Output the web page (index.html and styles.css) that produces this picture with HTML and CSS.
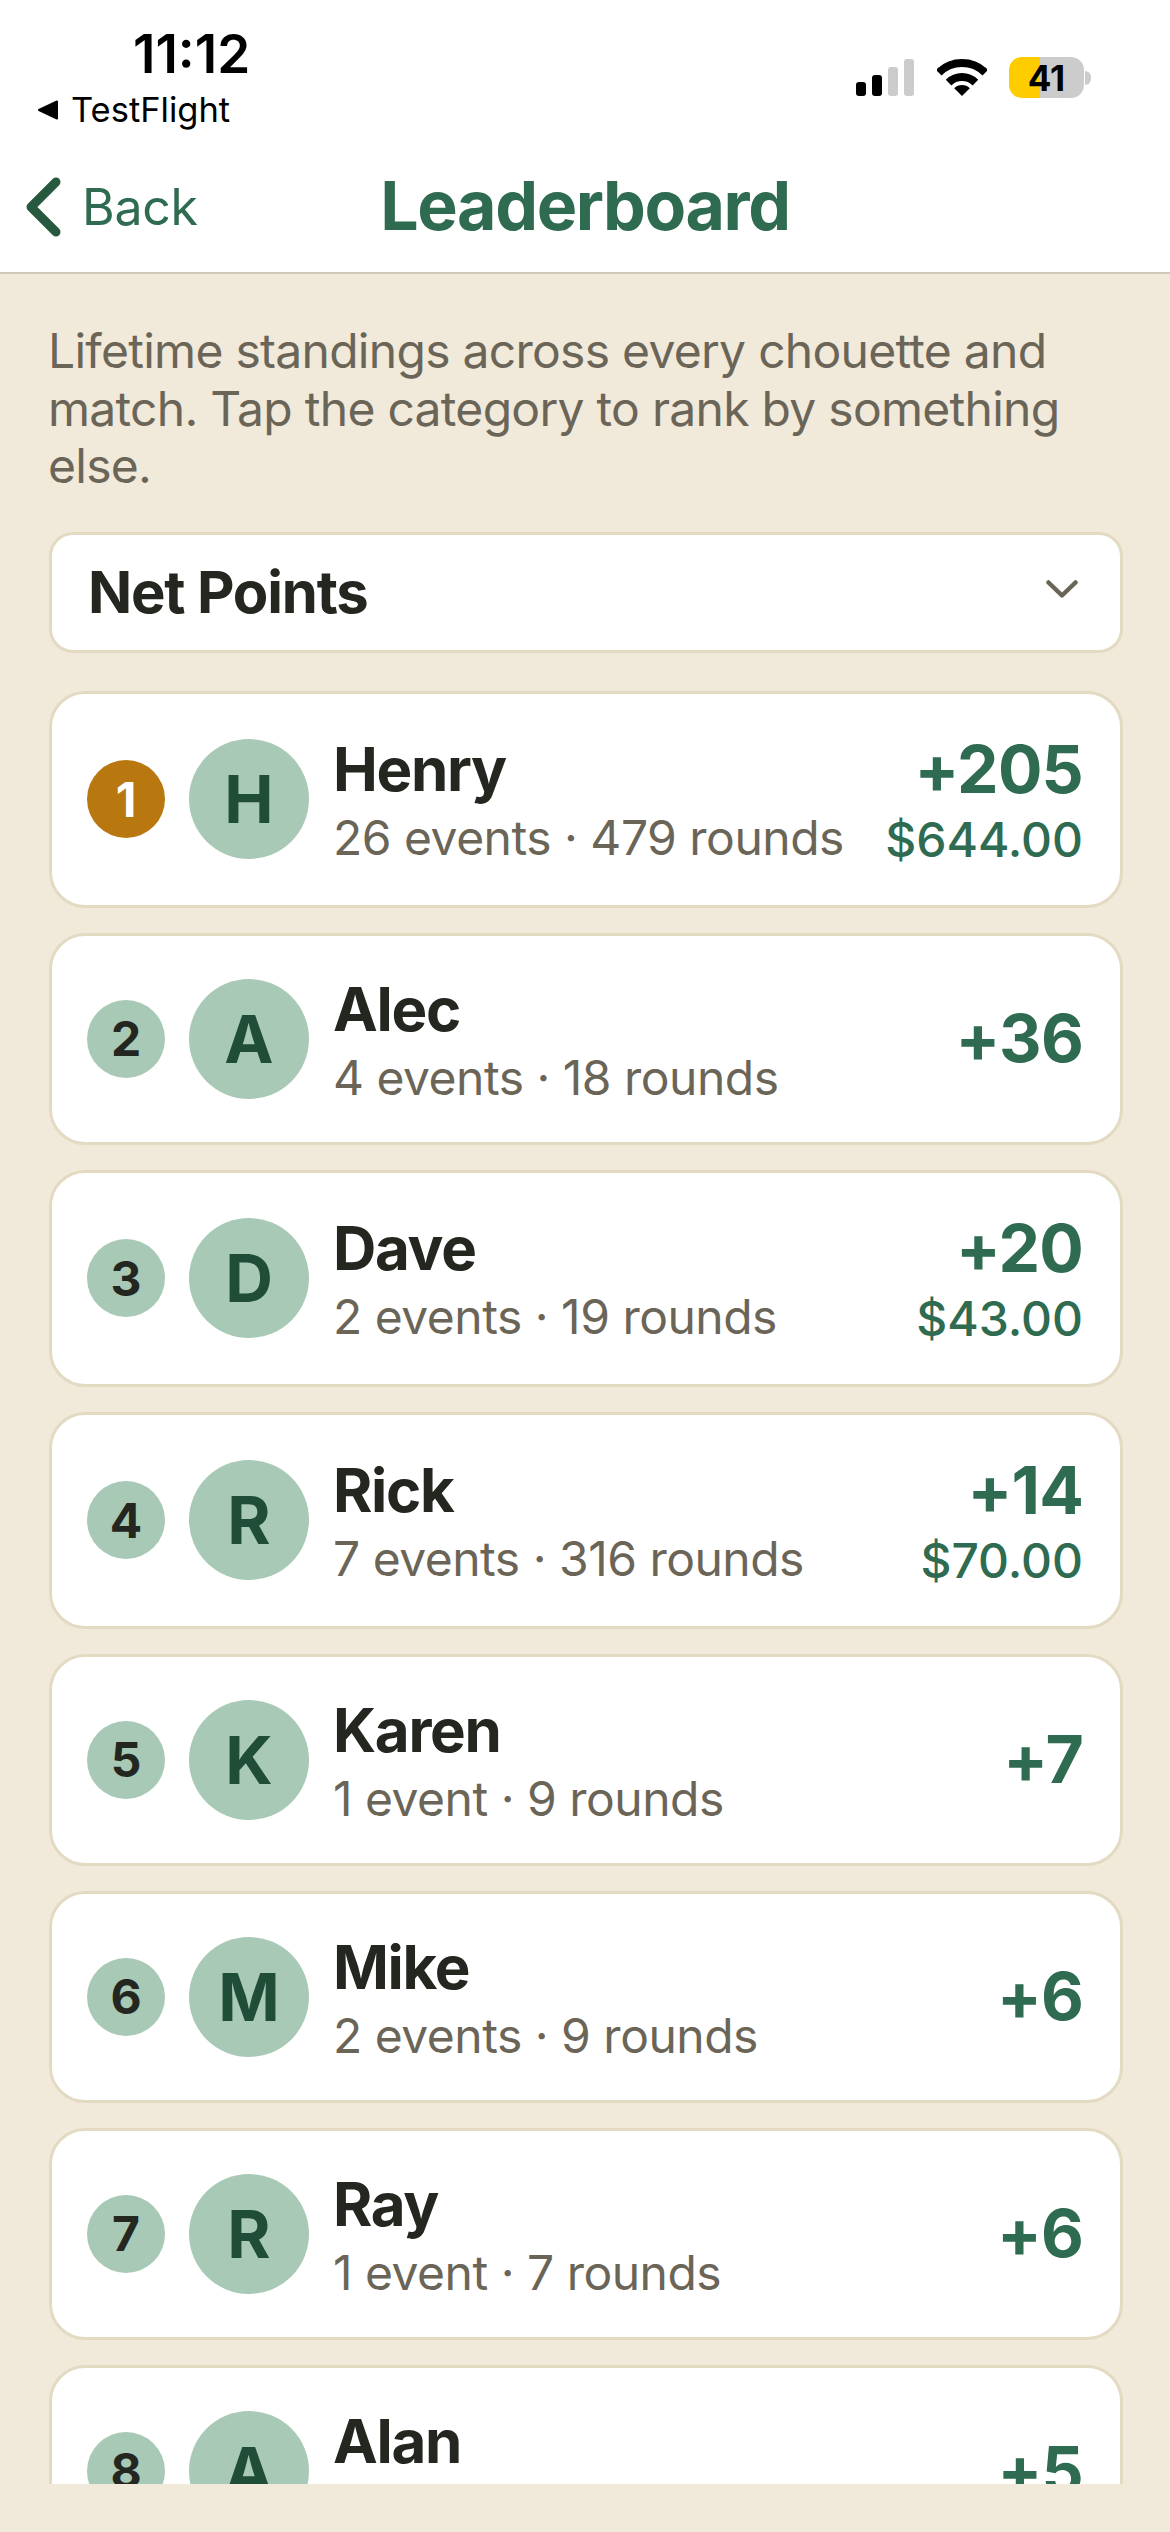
FILE: index.html
```html
<!DOCTYPE html>
<html lang="en">
<head>
    <meta charset="UTF-8">
    <meta name="viewport" content="width=device-width, initial-scale=1.0">
    <title>Leaderboard</title>
    <link rel="stylesheet" href="styles.css">
</head>
<body>
    <header>
        <div class="status-bar">
            <div class="status-left">
                <div class="time">11:12</div>
                <div class="return-app">
                    <svg class="return-arrow" viewBox="0 0 21 20"><path d="M20 1.5V18.5L2 10Z" fill="#000" stroke="#000" stroke-width="2" stroke-linejoin="round"/></svg>
                    <span>TestFlight</span>
                </div>
            </div>
            <div class="status-right">
                <div class="signal">
                    <span class="bar bar-1"></span>
                    <span class="bar bar-2"></span>
                    <span class="bar bar-3 off"></span>
                    <span class="bar bar-4 off"></span>
                </div>
                <svg class="wifi" viewBox="0 0 50 37">
                    <path d="M25 37L17.2 29.2A11 11 0 0 1 32.8 29.2Z" fill="#000"/>
                    <path d="M11.6 23.6A19 19 0 0 1 38.4 23.6" fill="none" stroke="#000" stroke-width="8"/>
                    <path d="M1.7 13.7A33 33 0 0 1 48.3 13.7" fill="none" stroke="#000" stroke-width="8"/>
                </svg>
                <div class="battery">
                    <div class="battery-body"><span>41</span></div>
                    <div class="battery-tip"></div>
                </div>
            </div>
        </div>
        <nav>
            <a class="back" href="#">
                <svg class="back-chevron" viewBox="0 0 36 60"><path d="M31 5L6 30L31 55" fill="none" stroke="#27593f" stroke-width="9" stroke-linecap="round" stroke-linejoin="round"/></svg>
                <span>Back</span>
            </a>
            <h1>Leaderboard</h1>
        </nav>
    </header>
    <main>
        <p class="intro">Lifetime standings across every chouette and match. Tap the category to rank by something else.</p>
        <div class="picker">
            <span>Net Points</span>
            <svg class="picker-chevron" viewBox="0 0 32 18"><path d="M2.5 2.5L16 15.5L29.5 2.5" fill="none" stroke="#6b6558" stroke-width="4.5" stroke-linecap="round" stroke-linejoin="round"/></svg>
        </div>
        <div class="list">
            <div class="card">
                <div class="rank gold">1</div>
                <div class="avatar">H</div>
                <div class="info">
                    <div class="name">Henry</div>
                    <div class="sub">26 events · 479 rounds</div>
                </div>
                <div class="result">
                    <div class="points">+205</div>
                    <div class="money">$644.00</div>
                </div>
            </div>
            <div class="card">
                <div class="rank">2</div>
                <div class="avatar">A</div>
                <div class="info">
                    <div class="name">Alec</div>
                    <div class="sub">4 events · 18 rounds</div>
                </div>
                <div class="result">
                    <div class="points">+36</div>
                </div>
            </div>
            <div class="card">
                <div class="rank">3</div>
                <div class="avatar">D</div>
                <div class="info">
                    <div class="name">Dave</div>
                    <div class="sub">2 events · 19 rounds</div>
                </div>
                <div class="result">
                    <div class="points">+20</div>
                    <div class="money">$43.00</div>
                </div>
            </div>
            <div class="card">
                <div class="rank">4</div>
                <div class="avatar">R</div>
                <div class="info">
                    <div class="name">Rick</div>
                    <div class="sub">7 events · 316 rounds</div>
                </div>
                <div class="result">
                    <div class="points">+14</div>
                    <div class="money">$70.00</div>
                </div>
            </div>
            <div class="card">
                <div class="rank">5</div>
                <div class="avatar">K</div>
                <div class="info">
                    <div class="name">Karen</div>
                    <div class="sub">1 event · 9 rounds</div>
                </div>
                <div class="result">
                    <div class="points">+7</div>
                </div>
            </div>
            <div class="card">
                <div class="rank">6</div>
                <div class="avatar">M</div>
                <div class="info">
                    <div class="name">Mike</div>
                    <div class="sub">2 events · 9 rounds</div>
                </div>
                <div class="result">
                    <div class="points">+6</div>
                </div>
            </div>
            <div class="card">
                <div class="rank">7</div>
                <div class="avatar">R</div>
                <div class="info">
                    <div class="name">Ray</div>
                    <div class="sub">1 event · 7 rounds</div>
                </div>
                <div class="result">
                    <div class="points">+6</div>
                </div>
            </div>
            <div class="card">
                <div class="rank">8</div>
                <div class="avatar">A</div>
                <div class="info">
                    <div class="name">Alan</div>
                </div>
                <div class="result">
                    <div class="points">+5</div>
                </div>
            </div>
        </div>
    </main>
</body>
</html>
```

FILE: styles.css
```css
* {
    box-sizing: border-box;
}
html, body {
    margin: 0;
    padding: 0;
}
body {
    width: 1170px;
    height: 2532px;
    display: flex;
    flex-direction: column;
    overflow: hidden;
    font-family: Inter, "Liberation Sans", sans-serif;
    background-color: #f1e9da;
    color: #23271f;
}
header {
    background-color: #fff;
    border-bottom: 2px solid #cfc9bb;
    height: 274px;
    flex-shrink: 0;
}
.status-bar {
    height: 132px;
    display: flex;
    justify-content: space-between;
}
.status-left {
    display: flex;
    flex-direction: column;
    padding: 25px 0 0 37px;
}
.time {
    font-size: 53px;
    line-height: 58px;
    font-weight: 600;
    color: #000;
    margin-left: 96px;
}
.return-app {
    display: flex;
    align-items: center;
    gap: 13px;
    font-size: 34.5px;
    line-height: 44px;
    color: #000;
    margin-top: 5px;
}
.return-arrow {
    width: 21px;
    height: 20px;
}
.status-right {
    display: flex;
    align-items: flex-start;
    padding: 57px 79px 0 0;
}
.signal {
    display: flex;
    align-items: flex-end;
    gap: 6px;
    height: 37px;
    margin: 2px 23px 0 0;
}
.bar {
    width: 10px;
    background-color: #000;
    border-radius: 3px;
}
.bar.off {
    background-color: #ccc;
}
.bar-1 { height: 14px; }
.bar-2 { height: 21px; }
.bar-3 { height: 29px; }
.bar-4 { height: 37px; }
.wifi {
    width: 50px;
    height: 37px;
    margin: 2px 22px 0 0;
}
.battery {
    display: flex;
    align-items: center;
    height: 41px;
}
.battery-body {
    width: 75px;
    height: 41px;
    border-radius: 13px;
    background: linear-gradient(to right, #ffcc00 41%, #ccc 41%);
    display: flex;
    align-items: center;
    justify-content: center;
    font-size: 35px;
    font-weight: 700;
    color: #000;
}
.battery-tip {
    width: 6px;
    height: 14px;
    margin-left: 1px;
    background-color: #ccc;
    border-radius: 0 7px 7px 0;
}
nav {
    height: 140px;
    position: relative;
    display: flex;
    align-items: center;
    justify-content: center;
    padding-top: 6px;
}
.back {
    position: absolute;
    left: 25px;
    top: 45px;
    display: flex;
    align-items: center;
    gap: 21px;
    font-size: 50px;
    line-height: 60px;
    letter-spacing: -0.3px;
    color: #2f6b50;
    text-decoration: none;
}
.back-chevron {
    width: 36px;
    height: 60px;
}
h1 {
    margin: 0;
    font-size: 68px;
    line-height: 80px;
    letter-spacing: -1.4px;
    font-weight: 700;
    color: #2f6b50;
}
main {
    flex: 1;
    margin-bottom: 48px;
    padding: 0 47px 0 49px;
    overflow: hidden;
}
.intro {
    margin: 0 0 0 -1px;
    padding-top: 48px;
    font-size: 48px;
    line-height: 57.5px;
    letter-spacing: -0.72px;
    color: #6b6558;
}
.picker {
    margin-top: 37px;
    height: 121px;
    padding: 0 42px 0 36px;
    display: flex;
    align-items: center;
    justify-content: space-between;
    background-color: #fff;
    border: 3px solid #e3dac2;
    border-radius: 24px;
    font-size: 58px;
    letter-spacing: -1.2px;
    font-weight: 700;
}
.picker-chevron {
    width: 32px;
    height: 18px;
    margin-bottom: 6px;
}
.list {
    margin-top: 38px;
    display: flex;
    flex-direction: column;
    gap: 25px;
}
.card {
    display: flex;
    align-items: center;
    gap: 26px;
    padding: 43px 37px 43px 35px;
    background-color: #fff;
    border: 3px solid #e3dac2;
    border-radius: 36px;
}
.rank {
    width: 78px;
    height: 78px;
    flex-shrink: 0;
    margin-right: -2px;
    border-radius: 50%;
    background-color: #a8c9b6;
    display: flex;
    align-items: center;
    justify-content: center;
    font-size: 48px;
    font-weight: 700;
}
.rank.gold {
    background-color: #b8780f;
    color: #fff;
}
.avatar {
    width: 120px;
    height: 120px;
    flex-shrink: 0;
    border-radius: 50%;
    background-color: #a8c9b6;
    color: #1f4d38;
    display: flex;
    align-items: center;
    justify-content: center;
    font-size: 66px;
    font-weight: 700;
}
.info {
    flex: 1;
    min-width: 0;
    height: 120px;
    margin-left: -2px;
}
.name {
    font-size: 60px;
    line-height: 60px;
    letter-spacing: -1.3px;
    font-weight: 700;
}
.sub {
    margin-top: 9px;
    font-size: 48px;
    line-height: 60px;
    letter-spacing: -0.5px;
    white-space: nowrap;
    color: #6b6558;
}
.result {
    text-align: right;
    color: #2f6b50;
}
.points {
    font-size: 66px;
    line-height: 65px;
    letter-spacing: -0.8px;
    font-weight: 700;
}
.money {
    margin: 8px 0 -8px;
    font-size: 48px;
    line-height: 60px;
    font-weight: 550;
}
```
